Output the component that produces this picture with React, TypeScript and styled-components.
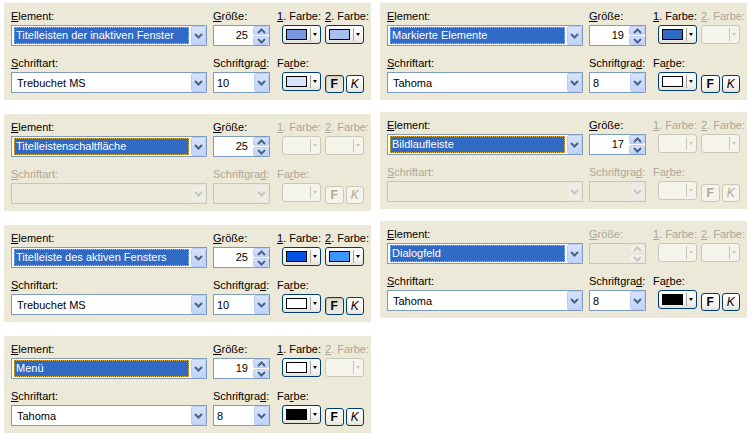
import React from 'react'
import styled, { createGlobalStyle, css } from 'styled-components'

const GlobalStyle = createGlobalStyle`
  html, body { margin: 0; padding: 0; background: #ffffff; }
  body {
    font-family: "Liberation Sans", Arial, sans-serif;
    font-size: 11px;
    color: #000000;
  }
`

type PanelData = {
  element: string
  size: string | null
  c1: string | null
  c2: string | null
  font: string | null
  fontSize?: string
  fontColor?: string
  bold?: boolean
}

const leftPanels: PanelData[] = [
  { element: 'Titelleisten der inaktiven Fenster', size: '25', c1: '#7a96df', c2: '#a6c0f2', font: 'Trebuchet MS', fontSize: '10', fontColor: '#d8e4f8', bold: true },
  { element: 'Titelleistenschaltfläche', size: '25', c1: null, c2: null, font: null },
  { element: 'Titelleiste des aktiven Fensters', size: '25', c1: '#0054e3', c2: '#3d95ff', font: 'Trebuchet MS', fontSize: '10', fontColor: '#ffffff', bold: true },
  { element: 'Menü', size: '19', c1: '#ffffff', c2: null, font: 'Tahoma', fontSize: '8', fontColor: '#000000' },
]

const rightPanels: PanelData[] = [
  { element: 'Markierte Elemente', size: '19', c1: '#316ac5', c2: null, font: 'Tahoma', fontSize: '8', fontColor: '#ffffff' },
  { element: 'Bildlaufleiste', size: '17', c1: null, c2: null, font: null },
  { element: 'Dialogfeld', size: null, c1: null, c2: null, font: 'Tahoma', fontSize: '8', fontColor: '#000000' },
]

const Page = styled.div`
  display: grid;
  grid-template-columns: 367px 367px;
  column-gap: 9px;
  align-items: start;
  padding: 3px 0 0 4px;
`

const Column = styled.div<{ $gap: number }>`
  display: flex;
  flex-direction: column;
  gap: ${p => p.$gap}px;
`

const Panel = styled.section`
  background: #ece9d8;
  height: 97px;
  box-sizing: border-box;
  padding: 5px 7px 7px;
  display: grid;
  grid-template-columns: 202px 64px 48px 39px;
  grid-template-rows: 38px 38px;
  row-gap: 9px;
`

const Field = styled.div`
  display: flex;
  flex-direction: column;
`

const Label = styled.div<{ $off?: boolean }>`
  height: 17px;
  line-height: 17px;
  white-space: nowrap;
  color: ${p => (p.$off ? '#aca899' : '#000000')};
  u { text-decoration: underline; text-underline-offset: 1px; }
`

const Combo = styled.div<{ $w: number; $off?: boolean }>`
  width: ${p => p.$w}px;
  height: 21px;
  box-sizing: border-box;
  border: 1px solid ${p => (p.$off ? '#c9c7ba' : '#7f9db9')};
  background: ${p => (p.$off ? '#ebeadb' : '#ffffff')};
  display: flex;
  align-items: center;
`

const Selection = styled.div`
  flex: 1;
  height: 17px;
  margin: 0 2px 0 2px;
  box-sizing: border-box;
  background: #316ac5;
  color: #ffffff;
  line-height: 15px;
  padding-left: 1px;
  border: 1px dotted #e7b440;
  white-space: nowrap;
  overflow: hidden;
`

const Value = styled.div<{ $pad: number }>`
  flex: 1;
  padding-left: ${p => p.$pad}px;
  white-space: nowrap;
`

const DropBtn = styled.div<{ $off?: boolean }>`
  width: 15px;
  height: 19px;
  box-sizing: border-box;
  border: 1px solid ${p => (p.$off ? '#e8e6dc' : '#b9cdf7')};
  border-radius: 2px;
  background: ${p => (p.$off ? '#eeede5' : 'linear-gradient(180deg, #d6e2fd 0%, #c1d3fb 100%)')};
  display: flex;
  align-items: center;
  justify-content: center;
`

const SpinBox = styled.div<{ $off?: boolean }>`
  width: 57px;
  height: 21px;
  box-sizing: border-box;
  border: 1px solid ${p => (p.$off ? '#c9c7ba' : '#7f9db9')};
  background: ${p => (p.$off ? '#ebeadb' : '#ffffff')};
  display: flex;
  align-items: stretch;
`

const SpinText = styled.div`
  flex: 1;
  text-align: right;
  line-height: 19px;
  padding-right: 5px;
`

const SpinBtns = styled.div`
  width: 16px;
  display: flex;
  flex-direction: column;
  gap: 1px;
`

const SpinHalf = styled.div<{ $off?: boolean }>`
  flex: 1;
  border: 1px solid ${p => (p.$off ? '#e8e6dc' : '#b9cdf7')};
  border-radius: 2px;
  background: ${p => (p.$off ? '#f1f0e8' : 'linear-gradient(180deg, #d6e2fd 0%, #c1d3fb 100%)')};
  display: flex;
  align-items: center;
  justify-content: center;
`

const ColorBtn = styled.div<{ $off?: boolean }>`
  align-self: center;
  width: 39px;
  height: 19px;
  box-sizing: border-box;
  border: 1px solid ${p => (p.$off ? '#cac8bb' : '#003c74')};
  border-radius: 3px;
  background: ${p => (p.$off ? '#f5f4ea' : 'linear-gradient(180deg, #ffffff 0%, #f3f2ec 70%, #e3e1d6 100%)')};
  display: flex;
  align-items: center;
  padding-left: 3px;
`

const Swatch = styled.div<{ $c: string | null }>`
  width: 21px;
  height: 11px;
  box-sizing: border-box;
  border: 1px solid ${p => (p.$c ? '#000000' : 'transparent')};
  background: ${p => p.$c ?? 'transparent'};
`

const Sep = styled.div<{ $off?: boolean }>`
  width: 1px;
  height: 13px;
  margin-left: 3px;
  background: ${p => (p.$off ? '#c9c7ba' : '#a7a6a0')};
`

const Tri = styled.div<{ $off?: boolean }>`
  margin-left: 2px;
  width: 0;
  height: 0;
  border-left: 2.5px solid transparent;
  border-right: 2.5px solid transparent;
  border-top: 3px solid ${p => (p.$off ? '#c9c7ba' : '#000000')};
`

const Toggles = styled.div`
  display: flex;
  gap: 2px;
  align-items: center;
  height: 21px;
  padding-top: 2px;
  box-sizing: border-box;
`

const ToggleBtn = styled.div<{ $off?: boolean; $on?: boolean; $italic?: boolean }>`
  width: 19px;
  height: 18px;
  box-sizing: border-box;
  border: 1px solid ${p => (p.$off ? '#cac8bb' : '#003c74')};
  border-radius: 3px;
  display: flex;
  align-items: center;
  justify-content: center;
  font-size: 12px;
  color: ${p => (p.$off ? '#aca899' : '#000000')};
  ${p => (p.$italic ? css`font-style: italic;` : css`font-weight: bold;`)}
  background: ${p =>
    p.$off ? '#f5f4ea' : p.$on ? 'linear-gradient(180deg, #e0ded3 0%, #ecebe4 100%)' : 'linear-gradient(180deg, #ffffff 0%, #f0efe8 80%, #e3e1d6 100%)'};
  ${p => p.$on && css`box-shadow: inset 1px 1px 1px #c7c4b6;`}
`

function Chevron({ off, up }: { off?: boolean; up?: boolean }) {
  return (
    <svg width="9" height="6" viewBox="0 0 9 6" style={up ? { transform: 'rotate(180deg)' } : undefined}>
      <path d="M1 1 L4.5 4.5 L8 1" fill="none" stroke={off ? '#c9c7ba' : '#4d6185'} strokeWidth="2" />
    </svg>
  )
}

function mn(text: string, idx: number) {
  return (
    <>
      {text.slice(0, idx)}
      <u>{text[idx]}</u>
      {text.slice(idx + 1)}
    </>
  )
}

function ColorPick({ color }: { color: string | null }) {
  const off = color === null
  return (
    <ColorBtn $off={off}>
      <Swatch $c={color} />
      <Sep $off={off} />
      <Tri $off={off} />
    </ColorBtn>
  )
}

function SettingsPanel({ d }: { d: PanelData }) {
  const fontOff = d.font === null
  const sizeOff = d.size === null
  return (
    <Panel>
      <Field>
        <Label>{mn('Element:', 0)}</Label>
        <Combo $w={196}>
          <Selection>{d.element}</Selection>
          <DropBtn><Chevron /></DropBtn>
        </Combo>
      </Field>
      <Field>
        <Label $off={sizeOff}>{mn('Größe:', 0)}</Label>
        <SpinBox $off={sizeOff}>
          <SpinText>{d.size}</SpinText>
          <SpinBtns>
            <SpinHalf $off={sizeOff}><Chevron off={sizeOff} up /></SpinHalf>
            <SpinHalf $off={sizeOff}><Chevron off={sizeOff} /></SpinHalf>
          </SpinBtns>
        </SpinBox>
      </Field>
      <Field>
        <Label $off={d.c1 === null}>{mn('1. Farbe:', 0)}</Label>
        <ColorPick color={d.c1} />
      </Field>
      <Field>
        <Label $off={d.c2 === null}>{mn('2. Farbe:', 0)}</Label>
        <ColorPick color={d.c2} />
      </Field>

      <Field>
        <Label $off={fontOff}>{mn('Schriftart:', 0)}</Label>
        <Combo $w={196} $off={fontOff}>
          <Value $pad={5}>{d.font}</Value>
          <DropBtn $off={fontOff}><Chevron off={fontOff} /></DropBtn>
        </Combo>
      </Field>
      <Field>
        <Label $off={fontOff}>{mn('Schriftgrad:', 10)}</Label>
        <Combo $w={57} $off={fontOff}>
          <Value $pad={3}>{d.fontSize}</Value>
          <DropBtn $off={fontOff}><Chevron off={fontOff} /></DropBtn>
        </Combo>
      </Field>
      <Field>
        <Label $off={fontOff}>{mn('Farbe:', 2)}</Label>
        <ColorPick color={fontOff ? null : d.fontColor ?? null} />
      </Field>
      <Field>
        <Label />
        <Toggles>
          <ToggleBtn $off={fontOff} $on={d.bold}>F</ToggleBtn>
          <ToggleBtn $off={fontOff} $italic>K</ToggleBtn>
        </Toggles>
      </Field>
    </Panel>
  )
}

export default function App() {
  return (
    <>
      <GlobalStyle />
      <Page>
        <Column $gap={14}>
          {leftPanels.map(p => <SettingsPanel key={p.element} d={p} />)}
        </Column>
        <Column $gap={12}>
          {rightPanels.map(p => <SettingsPanel key={p.element} d={p} />)}
        </Column>
      </Page>
    </>
  )
}
